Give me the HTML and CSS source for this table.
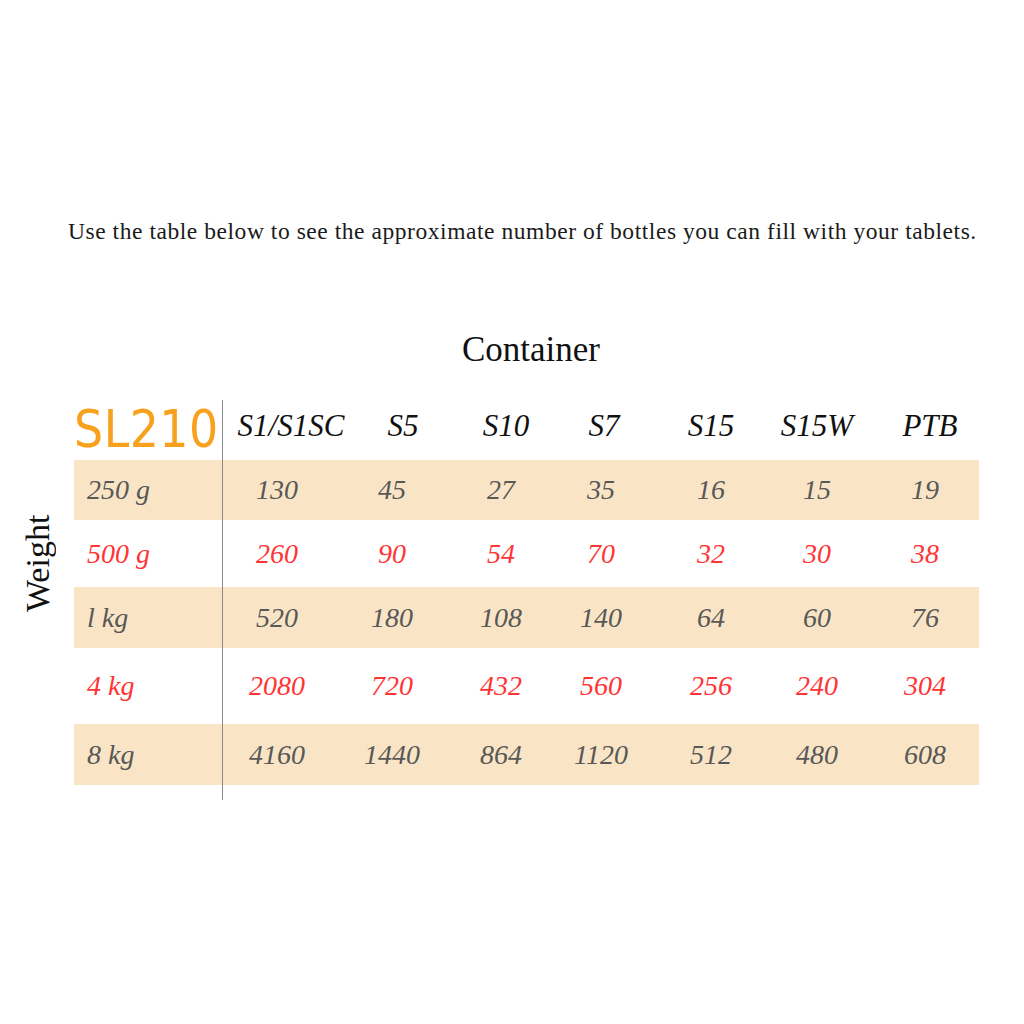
FILE: index.html
```html
<!DOCTYPE html>
<html lang="en">
<head>
<meta charset="utf-8">
<title>SL210 bottle table</title>
<link rel="stylesheet" href="styles.css">
</head>
<body>
<main class="page">
  <p class="intro">Use the table below to see the approximate number of bottles you can fill with your tablets.</p>
  <h2 class="title">Container</h2>
  <section class="chart">
    <div class="weight-col"><span class="weight">Weight</span></div>
    <div class="table">
      <div class="row head">
        <div class="cell label model">SL210</div>
        <div class="cell hd">S1/S1SC</div>
        <div class="cell hd">S5</div>
        <div class="cell hd">S10</div>
        <div class="cell hd">S7</div>
        <div class="cell hd">S15</div>
        <div class="cell hd">S15W</div>
        <div class="cell hd">PTB</div>
      </div>
      <div class="row band r1">
        <div class="cell label">250 g</div>
        <div class="cell">130</div><div class="cell">45</div><div class="cell">27</div><div class="cell">35</div><div class="cell">16</div><div class="cell">15</div><div class="cell">19</div>
      </div>
      <div class="row red r2">
        <div class="cell label">500 g</div>
        <div class="cell">260</div><div class="cell">90</div><div class="cell">54</div><div class="cell">70</div><div class="cell">32</div><div class="cell">30</div><div class="cell">38</div>
      </div>
      <div class="row band r3">
        <div class="cell label">l kg</div>
        <div class="cell">520</div><div class="cell">180</div><div class="cell">108</div><div class="cell">140</div><div class="cell">64</div><div class="cell">60</div><div class="cell">76</div>
      </div>
      <div class="row red r4">
        <div class="cell label">4 kg</div>
        <div class="cell">2080</div><div class="cell">720</div><div class="cell">432</div><div class="cell">560</div><div class="cell">256</div><div class="cell">240</div><div class="cell">304</div>
      </div>
      <div class="row band r5">
        <div class="cell label">8 kg</div>
        <div class="cell">4160</div><div class="cell">1440</div><div class="cell">864</div><div class="cell">1120</div><div class="cell">512</div><div class="cell">480</div><div class="cell">608</div>
      </div>
      <div class="row tail"><div class="cell label"></div></div>
    </div>
  </section>
</main>
</body>
</html>
```
FILE: styles.css
```css
html, body {
  margin: 0;
  padding: 0;
  background: #ffffff;
}

.page {
  width: 1024px;
  height: 1024px;
  font-family: "Liberation Serif", "Times New Roman", serif;
  color: #111;
}

.intro {
  margin: 0;
  padding-top: 216px;
  padding-left: 68px;
  font-size: 23.5px;
  letter-spacing: 0.55px;
  line-height: 30px;
  color: #1a1a1a;
  white-space: nowrap;
}

.title {
  margin: 0;
  padding-top: 84px;
  text-align: center;
  padding-left: 38px;
  font-weight: normal;
  font-size: 35px;
  line-height: 40px;
  color: #111;
}

.chart {
  display: flex;
  margin-top: 30px;
}

.weight-col {
  width: 74px;
  padding-top: 110px;
  display: flex;
  justify-content: center;
}

.weight {
  writing-mode: vertical-rl;
  transform: rotate(180deg);
  font-size: 34px;
  line-height: 34px;
  color: #111;
  height: 102px;
  padding-right: 2px;
}

.table {
  display: flex;
  flex-direction: column;
}

.row {
  display: flex;
  align-items: stretch;
}

.cell {
  width: 108px;
  display: flex;
  align-items: center;
  justify-content: center;
  font-style: italic;
  font-size: 28px;
  color: #585858;
  box-sizing: border-box;
}

.cell.label {
  width: 149px;
  justify-content: flex-start;
  padding-left: 13px;
  border-right: 1px solid #8a8a8a;
}

.row .cell:nth-child(3) { padding-left: 14px; }
.row .cell:nth-child(4) { padding-left: 16px; }
.row .cell:nth-child(6) { padding-left: 4px; }

.head {
  height: 60px;
}

.head .cell.hd {
  color: #111;
  font-size: 31px;
  padding-bottom: 8px;
}

.head .cell.hd:nth-child(2) { padding-left: 28px; }
.head .cell.hd:nth-child(3) { padding-left: 36px; }
.head .cell.hd:nth-child(4) { padding-left: 26px; }
.head .cell.hd:nth-child(5) { padding-left: 6px; }
.head .cell.hd:nth-child(8) { padding-left: 10px; }

.head .cell.model {
  font-family: "DejaVu Sans Condensed", "DejaVu Sans", sans-serif;
  font-stretch: condensed;
  font-style: normal;
  font-size: 51px;
  color: #f7a11c;
  padding-left: 0;
  padding-bottom: 2px;
  letter-spacing: 0.5px;
}

.band .cell {
  background: #f9e5c5;
}

.red .cell {
  color: #ff3535;
}

.r1 { height: 60px; }
.r2 { height: 67px; }
.r3 { height: 61px; }
.r4 { height: 76px; }
.r5 { height: 61px; }

.tail { height: 15px; }
```
